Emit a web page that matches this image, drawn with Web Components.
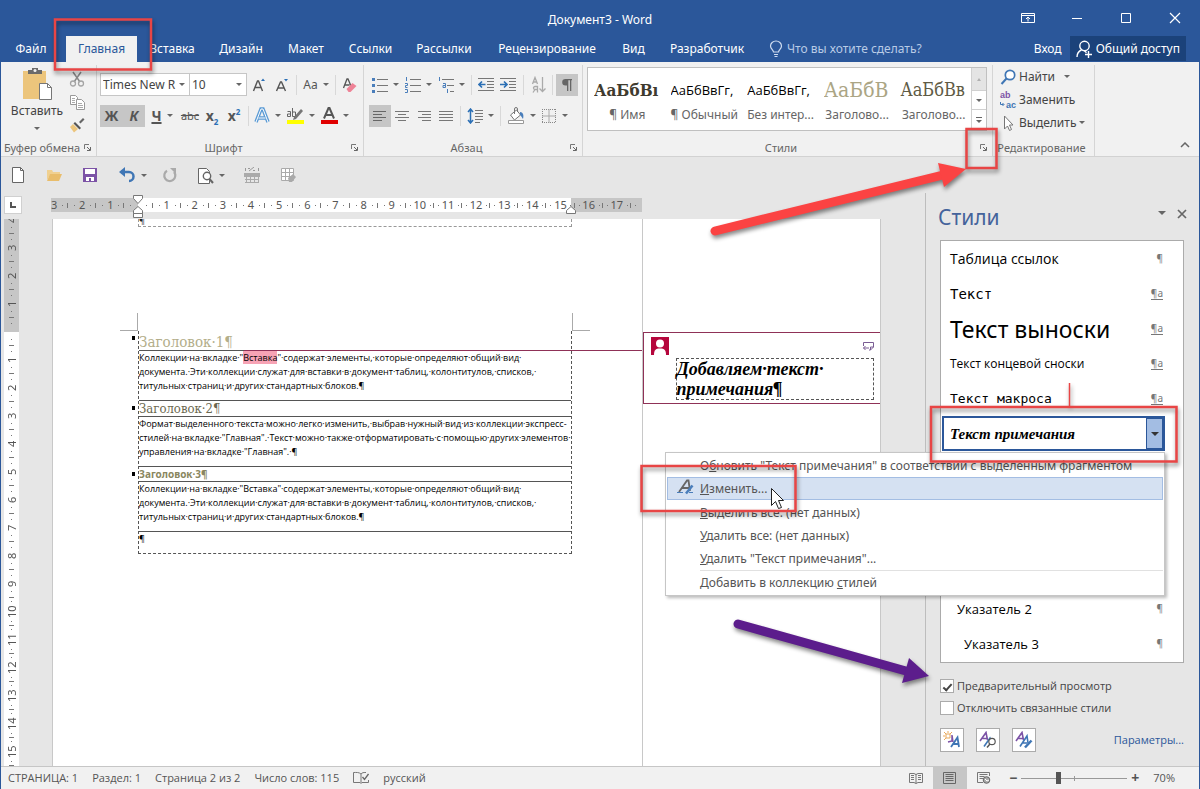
<!DOCTYPE html>
<html lang="ru">
<head>
<meta charset="utf-8">
<title>Документ3 - Word</title>
<style>
  html, body { margin: 0; }
  body { font: 12px/16px "Noto Sans", "Open Sans", sans-serif; color: #444; background: #e6e6e6; }
</style>
</head>
<body>
<word-app></word-app>

<script>
const ICONS = {
  paste: [30, 34, '<path d="M1 4h23v28H1z" fill="#ecc57c"/><path d="M6 7V3h4V1h6v2h4v4z" fill="#6a6a6a"/><circle cx="13" cy="3.5" r="1.5" fill="#f1f1f1"/><path d="M17.500 16.500h8l4 4v12h-12z" fill="#fff" stroke="#777"/><path d="M25.500 16.500v4h4" fill="none" stroke="#777"/>'],
  cut: [16, 16, '<path d="M4 1l7 10M12 1L5 11" stroke="#8a8a8a" stroke-width="1.500" fill="none"/><circle cx="4" cy="12.500" r="2.500" fill="none" stroke="#a5a5a5" stroke-width="1.300"/><circle cx="12" cy="12.500" r="2.500" fill="none" stroke="#a5a5a5" stroke-width="1.300"/>'],
  copy: [16, 16, '<path d="M1.500 1.500h5l2 2v7h-7z" fill="#fff" stroke="#999"/><path d="M7.500 5.500h5l3 3v7h-8z" fill="#fff" stroke="#999"/><path d="M3 4.500h3M3 6.500h3M3 8.500h3M9 9.500h4M9 11.500h5M9 13.500h5" stroke="#aaa"/>'],
  brush: [16, 16, '<path d="M10 5l4-4 1.500 1.500-4 4z" fill="#666"/><path d="M6 5l6 6-1.500 1.500-6-6z" fill="#555"/><path d="M4 7l5 5-4 3.500L1 10z" fill="#ecc57c"/>'],
  grow: [16, 16, '<path d="M2.500 14L6.500 4h1L11.500 14M4 10.500h6" fill="none" stroke="#555" stroke-width="1.400"/><path d="M10 4l2-2.500L14 4z" fill="#2b6fb5"/>'],
  shrink: [16, 16, '<path d="M2.500 14L6.500 5h1L11.500 14M4 11h6" fill="none" stroke="#555" stroke-width="1.400"/><path d="M10 2l2 2.500L14 2z" fill="#2b6fb5"/>'],
  clear: [16, 16, '<path d="M1.500 11L5 2h1l3 7M2.500 8h5" fill="none" stroke="#555" stroke-width="1.300"/><path d="M4.500 12l6-6 4 3-6 6h-2z" fill="#ee8296"/>'],
  effect: [16, 18, '<path d="M2 15L7 2h2l5 13M4.500 11h7" fill="none" stroke="#5b9bd5" stroke-width="3.500"/><path d="M2 15L7 2h2l5 13M4.500 11h7" fill="none" stroke="#fff" stroke-width="1"/>'],
  marker: [18, 18, '<path d="M1.500 4.500h3v5h-3v-2.500h3M6.500 1v8.500h3V5h-3" fill="none" stroke="#666"/><path d="M8 10l7-8 2 2-7 8-3 1z" fill="#777"/><path d="M1 13h17v4H1z" fill="#ff0"/>'],
  fcolor: [18, 18, '<path d="M4 11.500L8.500 1h1L14 11.500M6 8h6" fill="none" stroke="#555" stroke-width="2"/><path d="M1 13h17v4H1z" fill="#e00000"/>'],
  bullets: [16, 16, '<path d="M0 1h3v3H0zM0 7h3v3H0zM0 13h3v3H0z" fill="#4a7ebb"/><path d="M5 2.500h11M5 8.500h11M5 14.500h11" stroke="#777"/>'],
  numbers: [16, 16, '<path d="M1.500 0v4M0 6.500h2.500v2H.5v2h2M0 12.500h2.500v3H0" fill="none" stroke="#4a7ebb"/><path d="M5 2.500h11M5 8.500h11M5 14.500h11" stroke="#777"/>'],
  multi: [16, 16, '<path d="M1.500 0v4M5 6.500h2.500v4H5v-2h2M9.500 12v4" fill="none" stroke="#4a7ebb"/><path d="M4 2.500h12M9 8.500h7M12 14.500h4" stroke="#777"/>'],
  outdent: [16, 16, '<path d="M0 1.500h16M9 4.500h7M9 7.500h7M9 10.500h7M0 13.500h16" stroke="#777"/><path d="M7.500 7.500H1.500M4 4.500l-3 3 3 3" fill="none" stroke="#2b6fb5" stroke-width="1.700"/>'],
  indent: [16, 16, '<path d="M0 1.500h16M9 4.500h7M9 7.500h7M9 10.500h7M0 13.500h16" stroke="#777"/><path d="M0 7.500h6.500M4 4.500l3 3-3 3" fill="none" stroke="#2b6fb5" stroke-width="1.700"/>'],
  sort: [16, 18, '<path d="M1.500 8L4 1.500 6.500 8M2.500 6h3M6.500 16.500v-6H4a1.500 1.500 0 0 0 0 3h2.500M4 13.500l-2 3M11.500 1v14M8.500 12.500l3 3 3-3" fill="none" stroke="#aaa" stroke-width="1.300"/>'],
  pilcrow: [16, 16, '<path d="M13 2H6.500a3.300 3.300 0 0 0 0 6.600H8V14h1.300V3.200h1.700V14h1.300V3.200H13z" fill="#666"/>'],
  left: [16, 12, '<path d="M1 1.500h13M1 4.500h9M1 7.500h13M1 10.500h9" stroke="#666"/>'],
  center: [16, 12, '<path d="M1 1.500h14M4 4.500h8M1 7.500h14M4 10.500h8" stroke="#777"/>'],
  right: [16, 12, '<path d="M2 1.500h13M6 4.500h9M2 7.500h13M6 10.500h9" stroke="#777"/>'],
  justify: [16, 12, '<path d="M1 1.500h14M1 4.500h14M1 7.500h14M1 10.500h14" stroke="#777"/>'],
  spacing: [16, 16, '<path d="M3.500 1v14M1 4l2.500-3L6 4M1 12l2.500 3L6 12" fill="none" stroke="#2b6fb5" stroke-width="1.500"/><path d="M8 2.500h8M8 5.500h8M8 8.500h8M8 11.500h8M8 14.500h5" stroke="#777"/>'],
  bucket: [18, 18, '<path d="M3.500 8l6-5 4 5-6 5z" fill="#fff" stroke="#777"/><path d="M7.500 7V2a1.500 1.500 0 0 1 3 0v3" fill="none" stroke="#777"/><path d="M13 5c3 0 4 3 3 7-1-1-1.500-3-3-4z" fill="#4a7ebb"/><path d="M1.500 13.500h15v3h-15z" fill="#fff" stroke="#999"/>'],
  border: [16, 16, '<path d="M1 1.500h14M1 14.500h14M1.500 1v14M14.500 1v14" stroke="#888" stroke-dasharray="1 1"/><path d="M8 1v14M1 8h14" stroke="#aaa"/>'],
  find: [16, 16, '<circle cx="10" cy="6" r="4.700" fill="#fff" stroke="#3f76b5" stroke-width="1.700"/><path d="M6.500 9.500L1.500 15" stroke="#3f76b5" stroke-width="2"/>'],
  pointer: [16, 16, '<path d="M4.500 1v13l3-3 2 4.500 2-1-2-4.500h3.500z" fill="#fff" stroke="#777"/>'],
  newdoc: [16, 16, '<path d="M2.500.5h8l3 3v12h-11z" fill="#fff" stroke="#666"/><path d="M10.500.5v3h3" fill="none" stroke="#666"/>'],
  open: [16, 16, '<path d="M1 3h5l1 2h7v3H4l-3 5z" fill="#f0d090"/><path d="M4 7h12l-3 7H1z" fill="#e9bd6b"/>'],
  save: [16, 16, '<path d="M1 1h14v14H1z" fill="#7c53a6"/><path d="M3 2h10v5H3z" fill="#fff"/><path d="M4 10h8v4H4z" fill="#fff"/><path d="M7 11h2v3H7z" fill="#7c53a6"/>'],
  undo: [18, 16, '<path d="M3 5h8a4.500 4.500 0 0 1 0 9" fill="none" stroke="#3f76b5" stroke-width="2.500"/><path d="M7 0v10L1 5z" fill="#3f76b5"/>'],
  redo: [16, 16, '<path d="M5 3.800A5.500 5.500 0 1 0 12 5" fill="none" stroke="#aaa" stroke-width="2.200"/><path d="M8 1h6v6z" fill="#aaa"/>'],
  preview: [17, 17, '<path d="M1.500 1.500h8l3 3v12h-11z" fill="#fff" stroke="#666"/><circle cx="10" cy="9" r="3.700" fill="#fff" stroke="#666" stroke-width="1.400"/><path d="M12.500 12l3.500 4" stroke="#666" stroke-width="2"/>'],
  ruler2: [16, 17, '<path d="M1.500 1v3M14.500 1v3M5 4l5-4M4 1.500h2M9 3.500h2" stroke="#999"/><path d="M0 6h16v4H0z" fill="#aaa"/><path d="M1 12.500h14M1 15.500h14M2.500 10v6M6.500 10v6M10.500 10v6M14.500 10v6" stroke="#aaa"/>'],
  tabledraw: [17, 16, '<path d="M1.500 1.500h12v12h-12zM5.500 1v13M9.500 1v13M1 5.500h13M1 9.500h13" fill="#fff" stroke="#aaa"/><path d="M8 11l5-4 3 3-4 5H9z" fill="#aaa"/>'],
  bulb: [14, 18, '<path d="M4.500 12c0-2-3-3-3-6a5.500 5 0 0 1 11 0c0 3-3 4-3 6zM5 14.500h4M5.500 16.500h3" fill="none" stroke="#cfdcf0" stroke-width="1.200"/>'],
  person: [17, 18, '<circle cx="8.500" cy="6" r="4.700" fill="none" stroke="#fff" stroke-width="1.400"/><path d="M1 17c0-4 2-6 4.500-7M8.500 10.700l2 2M9 14.500h7M12.500 11v7" fill="none" stroke="#fff" stroke-width="1.400"/>'],
  ribbonopt: [14, 12, '<path d="M.5 1.500h13v9H.5zM.5 3.500h13M7 9.500v-4M5 7l2-2 2 2" fill="none" stroke="#fff"/>'],
  min: [12, 12, '<path d="M1 6.500h10" stroke="#fff"/>'],
  max: [12, 12, '<path d="M1.500 1.500h9v9h-9z" fill="none" stroke="#fff"/>'],
  close: [12, 12, '<path d="M1 1l10 10M11 1L1 11" stroke="#fff" stroke-width="1.200"/>'],
  closedark: [10, 10, '<path d="M1 1l8 8M9 1L1 9" stroke="#666" stroke-width="1.700"/>'],
  menudown: [8, 5, '<path d="M0 0h8L4 4z" fill="#666"/>'],
  scrollup: [8, 5, '<path d="M2 4h4L4 1z" fill="#b0b0b0"/>'],
  more: [8, 8, '<path d="M1 1.500h6" stroke="#666"/><path d="M1 4h6L4 7z" fill="#666"/>'],
  launcher: [7, 7, '<path d="M.5 5V.5H5" fill="none" stroke="#777"/><path d="M3 3l3 3M6.500 3v3.500H3" fill="none" stroke="#666"/>'],
  chevron: [10, 6, '<path d="M1 5l4-4 4 4" fill="none" stroke="#666" stroke-width="1.500"/>'],
  spell: [16, 14, '<path d="M8 3v9M8 3C6 1 3 1.500.5 1.500v10H7l1 1 1-1h6.500V9M8 3c1-1.500 3-1.500 4-1.500h1" fill="none" stroke="#777"/><path d="M9.500 6l2 2.500L15.500 3" fill="none" stroke="#666" stroke-width="1.300"/>'],
  read: [14, 12, '<path d="M7 2v9.500M.5 1.500H5L7 2.500 9 1.500h4.500v9H9l-2 1-2-1H.5z" fill="none" stroke="#777"/><path d="M2 3.500h3M2 5.500h3M2 7.500h3M9 3.500h3M9 5.500h3M9 7.500h3" stroke="#777"/>'],
  print: [14, 12, '<path d="M.5.5h12v11H.5zM2.500 2.500h8M2.500 4.500h8M2.500 6.500h8M2.500 8.500h8" fill="none" stroke="#666"/>'],
  web: [14, 12, '<path d="M12.500 4V.5H.5v10H6M2.500 2.500h8M2.500 4.500h5M2.500 6.500h4" fill="none" stroke="#777"/><circle cx="9.500" cy="8" r="3.300" fill="#aaa" stroke="#666"/><path d="M8 7l2 2 2-1" stroke="#fff" fill="none"/>'],
  editstyle: [18, 16, '<path d="M2 13L10 1.500h1.500L13 12M5 9h7.500" fill="none" stroke="#666" stroke-width="1.800"/><path d="M9 14.500l6.500-8" stroke="#4a7ebb" stroke-width="2.500"/><path d="M0 13.500h6M12 13.500h4" stroke="#4a7ebb"/>'],
  newstyle: [18, 18, '<path d="M3 3h4v4H3z" fill="#fff" stroke="#e8a95b"/><path d="M1 1l2 2M9 1L7 3M1 9l2-2M5 0v2M0 5h2" stroke="#e8a95b"/><path d="M5 11l4-1V4l1 7" fill="none" stroke="#7c53a6" stroke-width="1.500"/><path d="M8 16L14.500 6.500l1.500 9.500M10.500 13h5" fill="none" stroke="#3f76b5" stroke-width="1.800"/>'],
  inspect: [18, 18, '<path d="M1 10L7 1.500 8.500 9M3.500 7.500h5" fill="none" stroke="#7c53a6" stroke-width="1.600"/><path d="M5 15.500L11 7l1 2" fill="none" stroke="#3f76b5" stroke-width="1.600"/><circle cx="13" cy="10.500" r="3.200" fill="#fff" stroke="#555" stroke-width="1.200"/><path d="M11 13l-3 3.500" stroke="#555" stroke-width="1.500"/>'],
  manage: [18, 18, '<path d="M1 10L7 1.500 8.500 9M3.500 7.500h5" fill="none" stroke="#7c53a6" stroke-width="1.600"/><path d="M5 15.500L12 5l1 7M8 12h4" fill="none" stroke="#3f76b5" stroke-width="1.600"/><path d="M10 16.500l6.500-7" stroke="#3f76b5" stroke-width="2.500"/>'],
  avatar: [18, 18, '<path d="M0 0h18v18H0z" fill="#b5063c"/><circle cx="9" cy="6.500" r="4" fill="#fff"/><path d="M3 18c0-5 1.500-6.500 6-6.500s6 1.500 6 6.500z" fill="#fff"/>'],
  reply: [12, 9, '<path d="M1.500 4V.5h10v4.500L8.500 8H7" fill="none" stroke="#7a5c94"/><path d="M8.500 8V5h3" fill="none" stroke="#7a5c94"/><path d="M7 6H1.500M3.500 4l-2 2 2 2" fill="none" stroke="#7a5c94"/>'],
  replace: [5, 5, '<path d="M.5 0v2.500h3M2.500 1l1.500 1.500L2.500 4" fill="none" stroke="#3f76b5"/>']
};

class Base extends HTMLElement {
  connectedCallback() {
    if (!this.shadowRoot) {
      this.attachShadow({ mode: 'open' });
      this.shadowRoot.innerHTML = '<style>*{box-sizing:border-box}' + this.css() + '</style>' + this.html();
    }
  }
  css() { return ':host{display:block}'; }
  html() { return '<slot></slot>'; }
  at(name, fallback = '') { return this.getAttribute(name) ?? fallback; }
}

customElements.define('ui-icon', class extends Base {
  css() { return ':host{display:inline-block;flex:none;line-height:0}svg{display:block}'; }
  html() {
    const [w, h, body] = ICONS[this.at('name')];
    return `<svg width="${w}" height="${h}" viewBox="0 0 ${w} ${h}" aria-hidden="true">${body}</svg>`;
  }
});

customElements.define('tool-button', class extends Base {
  css() {
    return `:host{display:block;flex:none;width:var(--w,22px)}
    button{width:100%;height:var(--h,22px);display:flex;align-items:center;justify-content:center;gap:5px;padding:0;border:0;background:none;font:inherit;color:#555}
    :host([pressed]) button{background:#c6c6c6}
    i{border:3px solid transparent;border-top-color:#666;border-bottom:0}`;
  }
  html() {
    const icon = this.hasAttribute('icon') ? `<ui-icon name="${this.at('icon')}"></ui-icon>` : '';
    return `<button type="button" aria-label="${this.at('label')}">${icon}<slot></slot>${this.hasAttribute('drop') ? '<i></i>' : ''}</button>`;
  }
});

customElements.define('tool-sep', class extends Base {
  css() { return ':host{display:block;flex:none;width:1px;height:20px;background:#d8d8d8;margin:0 var(--m,6px)}'; }
});

customElements.define('title-bar', class extends Base {
  css() {
    return `:host{display:grid;grid-template-columns:1fr auto 1fr;align-items:center;height:36px;background:#2b579a;color:#fff}
    h1{grid-column:2;margin:0;padding-top:4px;font-size:12px;font-weight:400}
    div{display:flex;justify-content:flex-end;--w:49px;--h:32px}`;
  }
  html() {
    return `<h1>Документ3 - Word</h1><div>
      <tool-button icon="ribbonopt" label="Параметры ленты"></tool-button><tool-button icon="min" label="Свернуть"></tool-button>
      <tool-button icon="max" label="Развернуть"></tool-button><tool-button icon="close" label="Закрыть"></tool-button></div>`;
  }
});

customElements.define('ribbon-tabs', class extends Base {
  css() {
    return `:host{display:flex;justify-content:space-between;background:#2b579a;height:26px;color:#fff}
    nav{display:grid;grid-template-columns:60px 5px 71px 70px 68px 62px 67px 80px 126px 47px 100px auto}
    a{color:#fff;text-decoration:none;text-align:center;line-height:26px;white-space:nowrap}
    a.on{grid-column:3;background:#f1f1f1;color:#2b579a}
    label{display:flex;align-items:center;gap:4px;padding-left:12px}
    input{width:150px;border:0;padding:0;background:none;font:inherit;color:#b9cbe6}
    input::placeholder{color:#b9cbe6;opacity:1}
    .r{display:flex;padding-right:13px;gap:8px}
    button{display:flex;align-items:center;gap:3px;height:25px;padding:0 6px;border:0;background:#1b427a;color:#fff;font:inherit}`;
  }
  html() {
    const rest = ['Вставка', 'Дизайн', 'Макет', 'Ссылки', 'Рассылки', 'Рецензирование', 'Вид', 'Разработчик'];
    return `<nav><a href="#">Файл</a><a class="on" href="#">Главная</a>${rest.map(t => `<a href="#">${t}</a>`).join('')}
      <label><ui-icon name="bulb"></ui-icon><input aria-label="Помощник" placeholder="Что вы хотите сделать?"></label></nav>
      <div class="r"><a href="#">Вход</a><button type="button"><ui-icon name="person"></ui-icon>Общий доступ</button></div>`;
  }
});

customElements.define('ribbon-group', class extends Base {
  css() {
    return `:host{display:flex;flex-direction:column;flex:none;width:var(--gw);border-right:1px solid #d5d5d5;margin:3px 0 0}
    .b{flex:1;min-height:0}
    footer{display:flex;align-items:center;height:17px;font-size:11px;color:#666;padding-right:4px}
    span{flex:1;text-align:center;white-space:nowrap}`;
  }
  html() {
    return `<div class="b"><slot></slot></div><footer><span>${this.at('name')}</span>${this.hasAttribute('launch') ? '<tool-button style="--w:9px;--h:9px" icon="launcher" label="Дополнительно"></tool-button>' : ''}</footer>`;
  }
});

customElements.define('clipboard-tools', class extends Base {
  css() {
    return `:host{display:flex;padding:2px 9px 0 9px;justify-content:space-between}
    button{display:flex;flex-direction:column;align-items:center;border:0;background:none;padding:0;font:inherit;color:#444;gap:2px;width:54px}
    i{border:3px solid transparent;border-top-color:#666;border-bottom:0;margin-top:6px}
    div{--w:20px;--h:23px}`;
  }
  html() {
    return `<button type="button"><ui-icon name="paste"></ui-icon>Вставить<i></i></button>
    <div><tool-button icon="cut" label="Вырезать"></tool-button><tool-button icon="copy" label="Копировать"></tool-button><tool-button icon="brush" label="Формат по образцу"></tool-button></div>`;
  }
});

customElements.define('font-tools', class extends Base {
  css() {
    return `:host{display:block;padding:8px 0 0 3px}
    .row{display:flex;align-items:center;height:23px;margin-bottom:8px}
    select{appearance:none;height:23px;border:1px solid #c6c6c6;border-radius:0;font:inherit;color:#444;padding:0 0 0 2px;background:#fff}
    .c{position:relative;margin-right:-1px}
    .c::after{content:"";position:absolute;right:5px;top:10px;border:3px solid transparent;border-top-color:#666;border-bottom:0}
    .f select{width:90px}.s select{width:58px}
    b{font-size:14px}sub,sup{font-size:8px;color:#2b6fb5;line-height:0}
    u{text-decoration-thickness:2px}
    .ab{font-size:11px}`;
  }
  html() {
    return `<div class="row"><div class="c f"><select aria-label="Шрифт"><option>Times New R</option></select></div>
      <div class="c s"><select aria-label="Размер шрифта"><option>10</option></select></div>
      <tool-button style="--w:25px" icon="grow" label="Увеличить размер"></tool-button><tool-button icon="shrink" label="Уменьшить размер"></tool-button>
      <tool-sep style="--m:3px"></tool-sep><tool-button style="--w:32px" drop label="Регистр"><span>Aa</span></tool-button><tool-sep style="--m:3px"></tool-sep><tool-button icon="clear" label="Очистить формат"></tool-button></div>
      <div class="row"><tool-button style="--w:23px" pressed label="Полужирный"><b>Ж</b></tool-button><tool-button pressed label="Курсив"><b><em>К</em></b></tool-button>
      <tool-button style="--w:34px" drop label="Подчеркнутый"><b><u>Ч</u></b></tool-button><tool-button label="Зачеркнутый"><s class="ab">abc</s></tool-button>
      <tool-button label="Подстрочный"><b>x<sub>2</sub></b></tool-button><tool-button label="Надстрочный"><b>x<sup>2</sup></b></tool-button><tool-sep style="--m:3px"></tool-sep>
      <tool-button style="--w:31px" drop icon="effect" label="Эффекты"></tool-button><tool-button style="--w:34px" drop icon="marker" label="Цвет выделения"></tool-button><tool-button style="--w:34px" drop icon="fcolor" label="Цвет текста"></tool-button></div>`;
  }
});

customElements.define('paragraph-tools', class extends Base {
  css() {
    return `:host{display:block;padding:8px 4px 0 5px}
    .row{display:flex;align-items:center;height:23px;margin-bottom:8px}
    .push{margin-left:auto}`;
  }
  html() {
    return `<div class="row"><tool-button style="--w:33px" drop icon="bullets" label="Маркеры"></tool-button><tool-button style="--w:33px" drop icon="numbers" label="Нумерация"></tool-button><tool-button style="--w:33px" drop icon="multi" label="Многоуровневый список"></tool-button>
      <tool-sep style="--m:3px"></tool-sep><tool-button icon="outdent" label="Уменьшить отступ"></tool-button><tool-button icon="indent" label="Увеличить отступ"></tool-button>
      <tool-sep style="--m:4px"></tool-sep><tool-button icon="sort" label="Сортировка"></tool-button><tool-sep style="--m:2px"></tool-sep><tool-button class="push" pressed icon="pilcrow" label="Знаки"></tool-button></div>
      <div class="row"><tool-button pressed icon="left" label="По левому краю"></tool-button><tool-button icon="center" label="По центру"></tool-button><tool-button icon="right" label="По правому краю"></tool-button><tool-button icon="justify" label="По ширине"></tool-button>
      <tool-sep style="--m:3px"></tool-sep><tool-button style="--w:33px" drop icon="spacing" label="Интервал"></tool-button><tool-sep style="--m:3px"></tool-sep><tool-button style="--w:34px" drop icon="bucket" label="Заливка"></tool-button><tool-button style="--w:33px" drop icon="border" label="Границы"></tool-button></div>`;
  }
});

customElements.define('style-tile', class extends Base {
  css() {
    return `:host{display:block;flex:1;min-width:0}
    button{width:100%;height:61px;border:0;background:none;padding:8px 4px 0 6px;display:flex;flex-direction:column;font:inherit;color:#666}
    .p{height:28px;line-height:28px;width:100%;overflow:hidden;white-space:nowrap;text-align:left;font:var(--f);color:var(--c,#000)}
    .n{width:100%;text-align:center;white-space:nowrap;line-height:18px;padding-top:2px}`;
  }
  html() { return `<button type="button"><span class="p">${this.at('sample')}</span><span class="n">${this.at('name')}</span></button>`; }
});

customElements.define('style-gallery', class extends Base {
  css() {
    return `:host{display:flex;margin:2px 5px 0 4px;background:#fff;border:1px solid #c0c0c0;height:64px}
    .s{width:15px;display:grid;grid-template-rows:22px 19px 1fr;border-left:1px solid #d0d0d0;--w:14px}
    .s>*+*{border-top:1px solid #d0d0d0}
    .u{background:#e4e4e4}`;
  }
  html() {
    const serif = '"DejaVu Serif Condensed","DejaVu Serif",serif';
    const sans = "400 13px/28px 'Open Sans',sans-serif";
    return `<style-tile style='--f:700 17px/28px ${serif};--c:#3f3b2e' sample="АаБбВı" name="¶ Имя"></style-tile>
      <style-tile style="--f:${sans}" sample="АаБбВвГг," name="¶ Обычный"></style-tile>
      <style-tile style="--f:${sans}" sample="АаБбВвГг," name="Без интер..."></style-tile>
      <style-tile style='--f:400 21px/28px ${serif};--c:#aba584' sample="АаБбВ" name="Заголово..."></style-tile>
      <style-tile style='--f:400 18px/28px ${serif};--c:#5f5b45' sample="АаБбВв" name="Заголово..."></style-tile>
      <div class="s"><tool-button class="u" style="--h:22px" icon="scrollup" label="Вверх"></tool-button><tool-button style="--h:18px" drop label="Вниз"></tool-button><tool-button style="--h:20px" icon="more" label="Все стили"></tool-button></div>`;
  }
});

customElements.define('edit-tools', class extends Base {
  css() {
    return `:host{display:grid;grid-auto-rows:23px;padding-left:7px}
    button{display:flex;align-items:center;gap:3px;border:0;background:none;font:inherit;color:#444;padding:0}
    i{border:3px solid transparent;border-top-color:#666;border-bottom:0}
    .w{margin-left:6px}
    .r{width:16px;font:700 9px/10px "Liberation Sans",sans-serif;color:#7c53a6;text-align:left}
    .r span{display:flex;align-items:center;color:#3f76b5;justify-content:space-between}`;
  }
  html() {
    return `<button type="button"><ui-icon name="find"></ui-icon>Найти<i class="w"></i></button>
      <button type="button"><span class="r">ab<span><ui-icon name="replace"></ui-icon>ac</span></span>Заменить</button>
      <button type="button"><ui-icon name="pointer"></ui-icon>Выделить<i></i></button>`;
  }
});

customElements.define('word-ribbon', class extends Base {
  css() {
    return `:host{display:flex;height:95px;background:#f1f1f1;border-bottom:1px solid #d2d2d2}
    .grow{flex:1;min-width:0}
    .end{flex:none;width:104px;display:flex;align-items:flex-end;justify-content:flex-end;padding:0 3px 0 0}`;
  }
  html() {
    return `<ribbon-group style="--gw:96px" name="Буфер обмена" launch><clipboard-tools></clipboard-tools></ribbon-group>
      <ribbon-group style="--gw:267px" name="Шрифт" launch><font-tools></font-tools></ribbon-group>
      <ribbon-group style="--gw:219px" name="Абзац" launch><paragraph-tools></paragraph-tools></ribbon-group>
      <ribbon-group class="grow" name="Стили" launch><style-gallery></style-gallery></ribbon-group>
      <ribbon-group style="--gw:102px" name="Редактирование"><edit-tools></edit-tools></ribbon-group>
      <div class="end"><tool-button icon="chevron" label="Свернуть ленту"></tool-button></div>`;
  }
});

customElements.define('quick-bar', class extends Base {
  css() { return ':host{display:flex;align-items:center;height:36px;padding-left:5px;gap:12px;--w:24px}'; }
  html() {
    return `<tool-button icon="newdoc" label="Создать"></tool-button><tool-button icon="open" label="Открыть"></tool-button><tool-button icon="save" label="Сохранить"></tool-button>
      <tool-button style="--w:36px" drop icon="undo" label="Отменить"></tool-button><tool-button style="--w:16px" icon="redo" label="Повторить"></tool-button><tool-button style="--w:42px" drop icon="preview" label="Просмотр"></tool-button>
      <tool-button style="--w:16px" icon="ruler2" label="Линейка"></tool-button><tool-button style="--w:32px" icon="tabledraw" label="Таблица"></tool-button>`;
  }
});

customElements.define('h-ruler', class extends Base {
  css() {
    return `:host{display:block;position:relative;width:591px;height:14px;margin-left:30px}
    .bg{display:flex;overflow:hidden;height:14px;background:linear-gradient(90deg,#c6c6c6 87px,#fff 87px,#fff 520px,#c6c6c6 520px)}
    ol{flex:none;list-style:none;margin:0 0 0 -11px;padding:0;width:619px;display:grid;grid-template-columns:repeat(22,1fr);font:11px/14px "Noto Sans",sans-serif;color:#555}
    li{text-align:center;background:linear-gradient(#777,#777) right center/1px 5px no-repeat,linear-gradient(#777,#777) 6px center/1px 1px no-repeat,linear-gradient(#777,#777) 22px center/1px 1px no-repeat}
    li.w{background-position:right center,4px center,24px center}
    svg{position:absolute;top:-3px;left:82px}
    svg.e{left:515px}`;
  }
  html() {
    let s = '';
    for (let n = -3; n <= 18; n++) s += `<li${n > 9 ? ' class="w"' : ''}>${n === 0 || n === 18 ? '' : Math.abs(n)}</li>`;
    return `<div class="bg"><ol>${s}</ol></div>
      <svg width="10" height="24" viewBox="0 0 10 24"><path d="M.5.5h9v3l-4.500 5-4.500-5zM.5 18.500v-3l4.500-4 4.500 4v3zM.5 18.500h9v4h-9z" fill="#fff" stroke="#777"/></svg>
      <svg class="e" width="10" height="24" viewBox="0 0 10 24"><path d="M.5 18.500v-3l4.500-4 4.500 4v3z" fill="#fff" stroke="#777"/></svg>`;
  }
});

customElements.define('v-ruler', class extends Base {
  css() {
    return `:host{display:block;width:15px;height:100%;overflow:hidden;background:linear-gradient(#c6c6c6 113px,#fff 113px)}
    ol{list-style:none;margin:-13px 0 0;padding:0;font:11px/15px "Noto Sans",sans-serif;color:#555}
    li{height:28px;writing-mode:vertical-rl;transform:rotate(180deg);text-align:center;width:15px;
      background:linear-gradient(#777,#777) center top/5px 1px no-repeat,linear-gradient(#777,#777) center 6px/1px 1px no-repeat,linear-gradient(#777,#777) center 22px/1px 1px no-repeat}
    li.w{background-position:center top,center 4px,center 24px}`;
  }
  html() {
    let s = '';
    for (let n = -4; n <= 15; n++) s += `<li${n > 9 ? ' class="w"' : ''}>${n ? Math.abs(n) : ''}</li>`;
    return `<ol>${s}</ol>`;
  }
});

customElements.define('comment-card', class extends Base {
  css() {
    return `:host{display:block;border:1px solid #8f3157;border-right:0;height:72px;padding:4px 6px 5px 7px}
    header{display:flex;justify-content:space-between;align-items:center;height:18px}
    p{margin:3px 0 0 25px;border:1px dashed #555;font:italic 700 18px/20px "Liberation Serif",serif;color:#000}`;
  }
  html() {
    return `<header><ui-icon name="avatar"></ui-icon><ui-icon name="reply"></ui-icon></header><p>Добавляем·текст·<br>примечания¶</p>`;
  }
});

customElements.define('doc-page', class extends Base {
  css() {
    return `:host{display:flex;background:#fff;border-left:1px solid #c8c8c8;border-right:1px solid #c8c8c8;color:#222}
    main{flex:1;padding:0 70px 0 85px}
    aside{width:238px;border-left:1px solid #c8c8c8;padding-top:113px}
    .prev{height:8px;border:1px dashed #999;border-top:0;overflow:hidden;line-height:4px;font-size:9px}
    .marks{display:flex;justify-content:space-between;margin:86px -18px 0}
    .marks i{width:18px;height:18px;border-bottom:1px solid #aaa}
    .marks i:first-child{border-right:1px solid #aaa}.marks i:last-child{border-left:1px solid #aaa}
    .text{border:1px dashed #555;border-top:0;position:relative}
    h2,h3,h4,p{margin:0;white-space:nowrap;border-bottom:1px solid #555;position:relative}
    h2::before,h3::before,h4::before{content:"";position:absolute;left:-7px;top:5px;width:3px;height:4px;background:#000}
    h2{font:400 15px/22px "DejaVu Serif Condensed","DejaVu Serif",serif;height:20px;color:#b3ae8a}
    h3{font:400 13px/16px "DejaVu Serif Condensed","DejaVu Serif",serif;height:16px;color:#6b6850}
    h4{font:700 10px/14px "Noto Sans",sans-serif;height:15px;color:#8a875f}
    p{font:9px/14px "Open Sans",sans-serif;height:50px;color:#000}
    p:last-child{height:21px;border:0}
    mark{background:#f7a3b5;color:inherit}
    .line{position:absolute;left:105px;right:-71px;top:19px;height:1px;background:#8f3157;z-index:1}`;
  }
  html() {
    const dot = t => t.replace(/ /g, '·');
    const para = first => `<p>${dot('Коллекции на вкладке "')}${first}${dot('" содержат элементы, которые определяют общий вид ')}<br>${dot('документа. Эти коллекции служат для вставки в документ таблиц, колонтитулов, списков, ')}<br>${dot('титульных страниц и других стандартных блоков.')}¶</p>`;
    return `<main><div class="prev">¶</div><div class="marks"><i></i><i></i></div>
      <div class="text"><span class="line"></span>
      <h2>Заголовок·1¶</h2>${para('<mark>Вставка</mark>')}
      <h3>Заголовок·2¶</h3><p>${dot('Формат выделенного текста можно легко изменить, выбрав нужный вид из коллекции экспресс-')}<br>${dot('стилей на вкладке "Главная". Текст можно также отформатировать с помощью других элементов ')}<br>${dot('управления на вкладке "Главная". ')}¶</p>
      <h4>Заголовок·3¶</h4>${para('Вставка')}
      <p>¶</p></div></main>
      <aside><comment-card></comment-card></aside>`;
  }
});

customElements.define('doc-area', class extends Base {
  css() {
    return `:host{display:grid;grid-template-columns:17px 1fr;grid-template-rows:26px 1fr;min-width:0;flex:1;padding-left:3px}
    .tab{width:18px;height:18px;margin-top:3px;background:#fff;border:1px solid #d0d0d0;display:grid;place-items:center}
    .tab i{width:6px;height:6px;border:2px solid #555;border-width:0 0 2px 2px}
    h-ruler{margin-top:5px}
    doc-page{margin:0 45px 0 31px}`;
  }
  html() { return `<div class="tab"><i></i></div><h-ruler></h-ruler><v-ruler></v-ruler><doc-page></doc-page>`; }
});

customElements.define('style-item', class extends Base {
  css() {
    return `:host{display:flex;align-items:center;height:35px;padding:0 20px 0 9px;color:#000;white-space:nowrap}
    .n{flex:1;font:var(--f,13px/20px "Open Sans",sans-serif)}
    .m{font-size:10px;line-height:11px;color:#777}
    :host([linked]) .m{border-bottom:1px solid #777}
    :host([current]){border:2px solid #2b579a;padding:0 0 0 6px;margin:0 18px 0 1px}
    button{width:17px;height:31px;border:1px solid #2b579a;background:#a3bde3;padding:0;display:grid;place-items:center}
    button i{border:4px solid transparent;border-top-color:#333;border-bottom:0}`;
  }
  html() {
    const end = this.hasAttribute('current') ? '<button type="button" aria-label="Меню стиля"><i></i></button>'
      : `<span class="m">${this.hasAttribute('linked') ? '¶a' : '¶'}</span>`;
    return `<span class="n"><slot></slot></span>${end}`;
  }
});

customElements.define('styles-pane', class extends Base {
  css() {
    return `:host{display:flex;flex-direction:column;flex:none;width:274px;border-left:1px solid #bdbdbd;padding:0 15px 0 14px}
    header{display:flex;align-items:center;height:47px}
    h2{flex:1;margin:0 0 0 -2px;font:400 21px/28px "Noto Sans",sans-serif;color:#44639b}
    header div{display:flex;align-items:center;margin:-6px -8px 0 0;--w:20px}
    .list{height:423px;border:1px solid #ababab;background:#fff}
    .blank{height:140px}
    form{display:flex;flex-direction:column;gap:6px;margin-top:15px;font:11px/16px "Open Sans",sans-serif}
    label{display:flex;align-items:center;gap:3px;height:16px}
    input{appearance:none;width:14px;height:14px;margin:0;background:#fff;border:1px solid #ababab;display:grid;place-items:center}
    input:checked::after{content:"";width:7px;height:3px;border:1px solid #444;border-width:0 0 2px 2px;transform:rotate(-48deg)}
    footer{display:flex;align-items:center;gap:12px;margin-top:12px;font:11px/16px "Open Sans",sans-serif;--w:24px;--h:24px}
    footer tool-button{background:#fff;outline:1px solid #ababab;outline-offset:-1px}
    a{margin-left:auto;color:#2b579a;text-decoration:none}`;
  }
  html() {
    return `<header><h2>Стили</h2><div><tool-button icon="menudown" label="Меню"></tool-button><tool-button icon="closedark" label="Закрыть"></tool-button></div></header>
      <div class="list"><style-item style='--f:14px/20px "Open Sans",sans-serif'>Таблица ссылок</style-item>
      <style-item linked style='--f:14px/20px "DejaVu Sans Mono",monospace'>Текст</style-item>
      <style-item linked style='--f:23px/30px "Noto Sans",sans-serif'>Текст выноски</style-item>
      <style-item linked style='--f:12px/20px "Open Sans",sans-serif'>Текст концевой сноски</style-item>
      <style-item linked style='--f:13px/20px "DejaVu Sans Mono",monospace'>Текст макроса</style-item>
      <style-item current style='--f:italic 700 15px/20px "Liberation Serif",serif'>Текст примечания</style-item>
      <div class="blank"></div>
      <style-item><span style="padding-left:7px">Указатель 2</span></style-item>
      <style-item><span style="padding-left:14px">Указатель 3</span></style-item></div>
      <form><label><input type="checkbox" checked>Предварительный просмотр</label><label><input type="checkbox">Отключить связанные стили</label></form>
      <footer><tool-button icon="newstyle" label="Создать стиль"></tool-button><tool-button icon="inspect" label="Инспектор стилей"></tool-button><tool-button icon="manage" label="Управление стилями"></tool-button><a href="#">Параметры...</a></footer>`;
  }
});

customElements.define('context-menu', class extends Base {
  css() {
    return `:host{display:block;position:absolute;left:664px;top:452px;width:500px;box-sizing:border-box;background:#fff;border:1px solid #c6c6c6;box-shadow:2px 2px 3px #0004;padding:1px}
    button{display:flex;align-items:center;width:100%;height:23px;border:1px solid transparent;background:none;font:inherit;color:#555;padding:0 0 0 4px;white-space:pre}
    .i{width:28px}
    .on{background:#d5e1f2;border-color:#a3bde3;margin-bottom:1px}
    hr{border:0;border-top:1px solid #e1e1e1;margin:0 0 0 33px}`;
  }
  html() {
    const item = (t, c = '', icon = '') => `<button type="button" role="menuitem" class="${c}"><span class="i">${icon}</span><span>${t}</span></button>`;
    return item('О<u>б</u>новить "Текст примечания" в соответствии с выделенным фрагментом')
      + item('<u>И</u>зменить...', 'on', '<ui-icon name="editstyle"></ui-icon>')
      + item('<u>В</u>ыделить все: (нет данных)') + item('<u>У</u>далить все: (нет данных)') + item('<u>У</u>далить "Текст примечания"...')
      + '<hr>' + item('Добавить в коллекцию <u>с</u>тилей');
  }
});

customElements.define('callout-layer', class extends Base {
  css() { return ':host{display:block;position:absolute;left:-1px;top:0;pointer-events:none}svg{display:block}g{filter:drop-shadow(1px 3px 2px #0007)}'; }
  html() {
    return `<svg width="1200" height="789" viewBox="0 0 1200 789" aria-hidden="true">
      <path d="M771.500 488.500v17l4-4 3 7 3-1-3-7h5z" fill="#fff" stroke="#222"/>
      <g fill="none" stroke="#e84545" stroke-width="2.500"><rect x="55" y="19.500" width="96" height="50"/><rect x="966.500" y="129" width="30" height="39"/><rect x="931" y="407" width="245.500" height="54.500"/><rect x="641.500" y="466" width="154" height="45"/><path d="M1069.500 383v24" stroke-width="1.500"/></g>
      <g><path d="M715 231L943 175" stroke="#fb4343" stroke-width="9" stroke-linecap="round"/><path d="M966 169L938 163l6 24z" fill="#fb4343"/></g>
      <g><path d="M738 624L906 671" stroke="#5c1d8c" stroke-width="9" stroke-linecap="round"/><path d="M929 676l-20-18-7 25z" fill="#5c1d8c"/></g>
    </svg>`;
  }
});

customElements.define('status-bar', class extends Base {
  css() {
    return `:host{display:flex;align-items:center;height:23px;box-sizing:border-box;background:#f1f1f1;border-top:1px solid #c6c6c6;font:11px/16px "Open Sans",sans-serif;color:#555;padding:0 24px 0 7px;white-space:nowrap;--h:22px}
    .l{display:flex;align-items:center;flex:1;gap:14px}
    .v{display:flex;--w:34px;margin-right:4px}
    .z{display:flex;align-items:center;--w:16px;font-size:14px;line-height:16px;font-weight:700}
    input{appearance:none;width:106px;height:12px;margin:0;background:linear-gradient(#999,#999) center/100% 1px no-repeat,linear-gradient(#999,#999) 50% center/1px 5px no-repeat}
    input::-webkit-slider-thumb{appearance:none;width:5px;height:12px;background:#555}
    output{margin-left:10px}`;
  }
  html() {
    return `<div class="l"><span>СТРАНИЦА: 1</span><span>Раздел: 1</span><span>Страница 2 из 2</span><span>Число слов: 115</span><ui-icon name="spell"></ui-icon><span>русский</span></div>
      <div class="v"><tool-button icon="read" label="Чтение"></tool-button><tool-button pressed icon="print" label="Разметка"></tool-button><tool-button icon="web" label="Веб"></tool-button></div>
      <div class="z"><tool-button label="Уменьшить">−</tool-button><input type="range" min="0" max="100" value="34" aria-label="Масштаб"><tool-button label="Увеличить">+</tool-button></div><output>70%</output>`;
  }
});

customElements.define('word-app', class extends Base {
  css() {
    return `:host{display:flex;flex-direction:column;position:relative;min-height:100vh;box-sizing:border-box;border:1px solid #2b579a;border-top:0}
    .work{display:flex;flex:1}`;
  }
  html() {
    return `<title-bar></title-bar><ribbon-tabs></ribbon-tabs><word-ribbon></word-ribbon><quick-bar></quick-bar>
      <div class="work"><doc-area></doc-area><styles-pane></styles-pane></div><status-bar></status-bar>
      <context-menu></context-menu><callout-layer></callout-layer>`;
  }
});
</script>
</body>
</html>
